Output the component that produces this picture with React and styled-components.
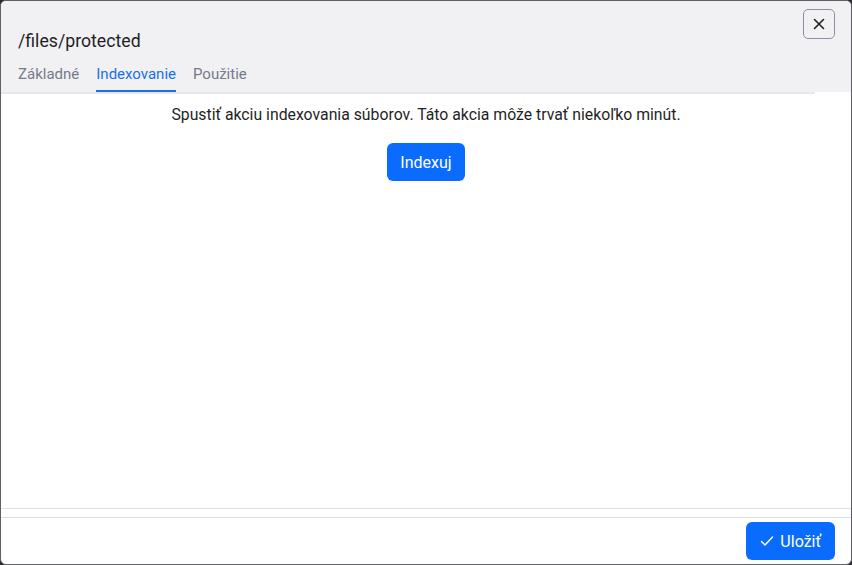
import React from "react";
import styled, { createGlobalStyle } from "styled-components";

const Global = createGlobalStyle`
  html, body { margin: 0; padding: 0; background: #2a2a2e; }
  body { font-family: Roboto, "Noto Sans", sans-serif; }
  * { box-sizing: border-box; }
`;

const Modal = styled.div`
  width: 852px;
  height: 565px;
  background: #ffffff;
  border: 1px solid #5f5f66;
  border-radius: 6px;
  overflow: hidden;
  display: flex;
  flex-direction: column;
`;

const Header = styled.div`
  background: #f1f1f4;
  padding: 0 16px 0 17px;
  display: flex;
  flex-direction: column;
  position: relative;
`;

const TitleRow = styled.div`
  display: flex;
  justify-content: space-between;
  align-items: flex-start;
  padding-top: 29px;
  height: 60px;
`;

const Title = styled.h1`
  margin: 0;
  font-size: 17.7px;
  font-weight: 400;
  color: #1f1f24;
  line-height: 22px;
`;

const CloseButton = styled.button`
  position: absolute;
  top: 8px;
  right: 16px;
  width: 32px;
  height: 30px;
  border: 1px solid #8b8fa6;
  border-radius: 5px;
  background: transparent;
  display: flex;
  align-items: center;
  justify-content: center;
  padding: 0;
  color: #1f1f24;
`;

const Tabs = styled.div`
  display: flex;
  gap: 17px;
  height: 31px;
`;

const Tab = styled.div`
  font-size: 15px;
  line-height: 17px;
  padding-top: 5px;
  color: ${(p) => (p.$active ? "#1a6fe8" : "#767a8a")};
  border-bottom: 2px solid ${(p) => (p.$active ? "#1a6fe8" : "transparent")};
  height: 31px;
`;

const TabLine = styled.div`
  height: 2px;
  background: #e7e7ee;
  margin-right: 36px;
`;

const Body = styled.div`
  flex: 1;
  display: flex;
  flex-direction: column;
  align-items: center;
  padding-top: 12px;
  border-bottom: 1px solid #dedee4;
`;

const Message = styled.p`
  margin: 0;
  font-size: 15.8px;
  line-height: 18px;
  color: #1f1f24;
`;

const PrimaryButton = styled.button`
  background: #0a6cff;
  color: #ffffff;
  border: none;
  border-radius: 6px;
  font-family: inherit;
  font-size: 16px;
  height: 38px;
  padding: 0 ${(p) => p.$px || 13}px;
  display: inline-flex;
  align-items: center;
  gap: 6px;
`;

const BodyButton = styled(PrimaryButton)`
  margin-top: 19px;
`;

const Spacer = styled.div`
  height: 8px;
`;

const Footer = styled.div`
  border-top: 1px solid #dedee4;
  display: flex;
  justify-content: flex-end;
  padding: 4px 16px 4px;
`;

export default function App() {
  return (
    <>
      <Global />
      <Modal>
        <Header>
          <TitleRow>
            <Title>/files/protected</Title>
          </TitleRow>
          <CloseButton aria-label="Zavrieť">
            <svg width="12" height="12" viewBox="0 0 12 12">
              <path d="M1.5 1.5L10.5 10.5M10.5 1.5L1.5 10.5" stroke="#1f1f24" strokeWidth="1.6" strokeLinecap="round" />
            </svg>
          </CloseButton>
          <Tabs>
            <Tab>Základné</Tab>
            <Tab $active>Indexovanie</Tab>
            <Tab>Použitie</Tab>
          </Tabs>
        </Header>
        <TabLine />
        <Body>
          <Message>Spustiť akciu indexovania súborov. Táto akcia môže trvať niekoľko minút.</Message>
          <BodyButton>Indexuj</BodyButton>
        </Body>
        <Spacer />
        <Footer>
          <PrimaryButton $px={14}>
            <svg width="14" height="12" viewBox="0 0 14 12">
              <path d="M1.5 6.5L5 10L12.5 2" stroke="#fff" strokeWidth="1.5" fill="none" strokeLinecap="round" strokeLinejoin="round" />
            </svg>
            Uložiť
          </PrimaryButton>
        </Footer>
      </Modal>
    </>
  );
}
